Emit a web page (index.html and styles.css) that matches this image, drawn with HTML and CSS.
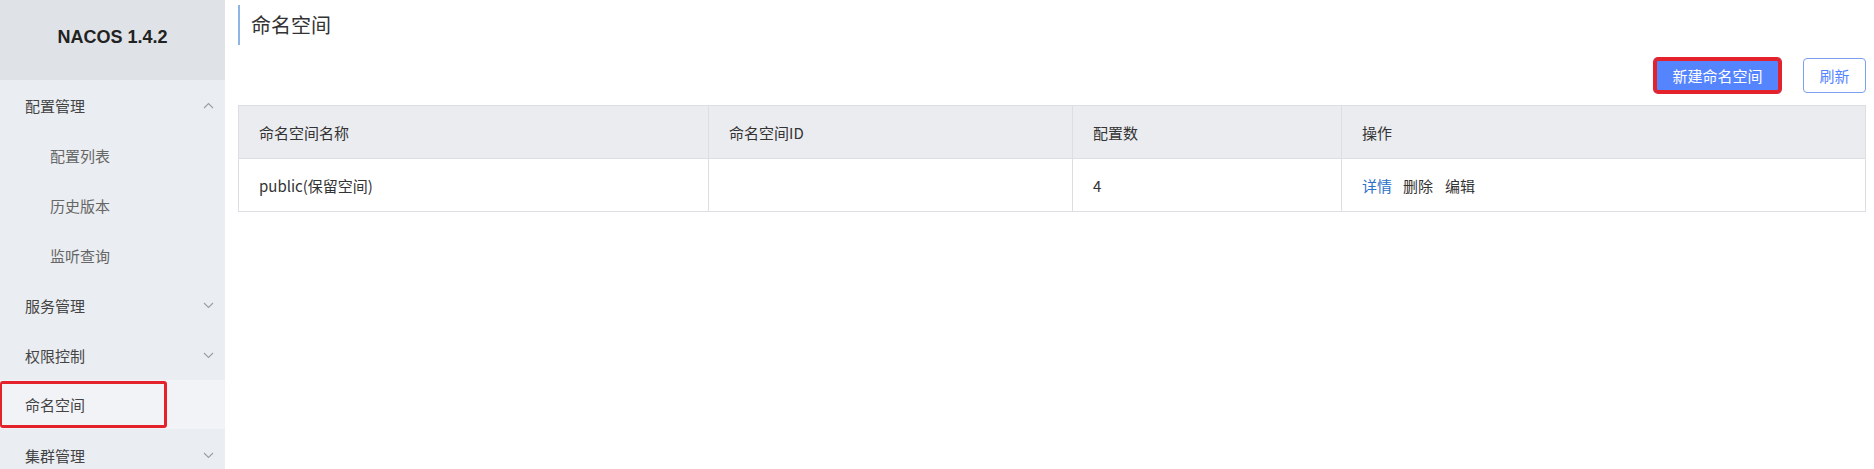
FILE: index.html
```html
<!DOCTYPE html>
<html lang="zh-CN">
<head>
<meta charset="utf-8">
<title>Nacos</title>
<link rel="stylesheet" href="styles.css">
</head>
<body>
<div class="app">
  <aside class="sidebar">
    <div class="brand">NACOS 1.4.2</div>
    <ul class="menu">
      <li class="item top"><span>配置管理</span>
        <svg class="chev" width="11" height="7" viewBox="0 0 11 7"><polyline points="1,6 5.5,1.5 10,6" fill="none" stroke="#9a9ea6" stroke-width="1.1"/></svg>
      </li>
      <li class="item sub"><span>配置列表</span></li>
      <li class="item sub"><span>历史版本</span></li>
      <li class="item sub"><span>监听查询</span></li>
      <li class="item top"><span>服务管理</span>
        <svg class="chev" width="11" height="7" viewBox="0 0 11 7"><polyline points="1,1 5.5,5.5 10,1" fill="none" stroke="#9a9ea6" stroke-width="1.1"/></svg>
      </li>
      <li class="item top"><span>权限控制</span>
        <svg class="chev" width="11" height="7" viewBox="0 0 11 7"><polyline points="1,1 5.5,5.5 10,1" fill="none" stroke="#9a9ea6" stroke-width="1.1"/></svg>
      </li>
      <li class="item top active"><span class="mark">命名空间</span></li>
      <li class="item top"><span>集群管理</span>
        <svg class="chev" width="11" height="7" viewBox="0 0 11 7"><polyline points="1,1 5.5,5.5 10,1" fill="none" stroke="#9a9ea6" stroke-width="1.1"/></svg>
      </li>
    </ul>
  </aside>
  <main class="main">
    <h1 class="page-title">命名空间</h1>
    <div class="toolbar">
      <button class="btn primary marked">新建命名空间</button>
      <button class="btn normal">刷新</button>
    </div>
    <table class="grid">
      <colgroup>
        <col class="c1"><col class="c2"><col class="c3"><col class="c4">
      </colgroup>
      <thead>
        <tr><th>命名空间名称</th><th>命名空间ID</th><th>配置数</th><th>操作</th></tr>
      </thead>
      <tbody>
        <tr>
          <td>public(保留空间)</td>
          <td></td>
          <td>4</td>
          <td><a class="link">详情</a><span class="op">删除</span><span class="op">编辑</span></td>
        </tr>
      </tbody>
    </table>
  </main>
</div>
</body>
</html>
```
FILE: styles.css
```css
* { box-sizing: border-box; }
html, body { margin: 0; padding: 0; }
body {
  font-family: "Noto Sans CJK SC", "Noto Sans", sans-serif;
  font-size: 15px;
  color: #333;
  background: #fff;
  width: 1874px;
  height: 469px;
  overflow: hidden;
}
.app { display: flex; height: 469px; }
.sidebar {
  width: 225px;
  flex: none;
  background: #eaedf1;
  height: 100%;
}
.brand {
  height: 80px;
  background: #dfe3e7;
  display: flex;
  align-items: center;
  justify-content: center;
  font-family: "Liberation Sans", Arial, sans-serif;
  font-weight: bold;
  font-size: 18px;
  color: #222;
  padding-bottom: 6px;
}
.menu { list-style: none; margin: 0; padding: 0; }
.item {
  height: 50px;
  display: flex;
  align-items: center;
  justify-content: space-between;
  padding-right: 11px;
  color: #444;
}
.item.top { padding-left: 25px; }
.item.sub { padding-left: 50px; color: #666; }
.item.active {
  background: #f2f3f6;
  padding-left: 0;
  height: 49px;
  margin-bottom: 1px;
}
.mark {
  width: 167px;
  height: 47px;
  display: flex;
  align-items: center;
  border: 3px solid #e4222c;
  border-left-width: 2px;
  border-radius: 3px;
  padding-left: 23px;
}
.chev { display: block; }
.main {
  flex: 1;
  padding: 5px 8px 0 13px;
}
.page-title {
  margin: 0;
  height: 40px;
  line-height: 40px;
  font-size: 20px;
  font-weight: normal;
  color: #333;
  border-left: 2px solid #8fb5e2;
  padding-left: 11px;
}
.toolbar {
  display: flex;
  justify-content: flex-end;
  gap: 22px;
  margin-top: 13px;
}
.btn {
  height: 35px;
  font-family: inherit;
  font-size: 15px;
  border-radius: 4px;
  padding: 0;
  cursor: pointer;
}
.btn.primary {
  width: 127px;
  background: #5584ff;
  color: #fff;
  border: none;
}
.btn.marked {
  box-shadow: 0 0 0 1px #e4222c, inset 0 0 0 3px #e4222c;
}
.btn.normal {
  width: 63px;
  background: #fff;
  color: #5584ff;
  border: 1px solid #7d9ff0;
}
.grid {
  margin-top: 12px;
  width: 100%;
  border-collapse: collapse;
  table-layout: fixed;
  border: 1px solid #dcdee3;
}
.c1 { width: 470px; }
.c2 { width: 364px; }
.c3 { width: 269px; }
.grid th, .grid td {
  height: 53px;
  text-align: left;
  font-weight: normal;
  padding: 0 20px;
  color: #333;
  border: 1px solid #dcdee3;
  border-top: none;
  border-bottom: none;
}
.grid th { background: #ebecf0; border-bottom: 1px solid #dcdee3; }
.link { color: #2b70c9; margin-right: 11px; cursor: pointer; }
.op { margin-right: 12px; color: #333; }
```
